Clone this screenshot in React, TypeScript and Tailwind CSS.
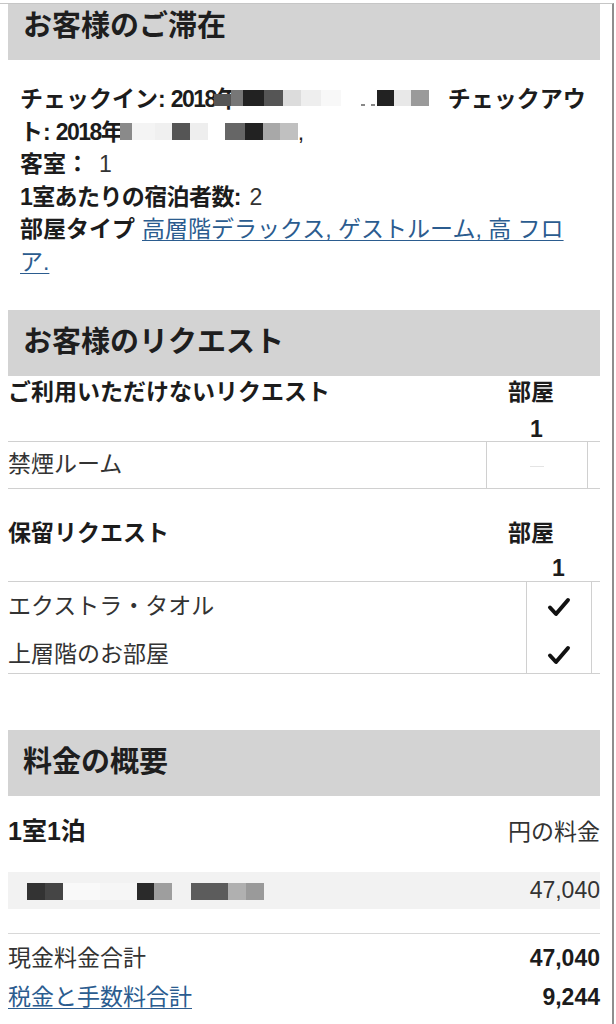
import React from "react";

type Block = { c: string };

function Mosaic({ blocks, className }: { blocks: Block[]; className: string }) {
  return (
    <span className={"relative inline-flex align-middle " + className}>
      {blocks.map((b, i) => (
        <span key={i} className={b.c} />
      ))}
    </span>
  );
}

const line1A: Block[] = [
  { c: "w-[17px] h-[12px] self-end bg-[#555]" },
  { c: "w-[12px] h-[16px] bg-[#777]" },
  { c: "w-[21px] h-[16px] bg-[#222]" },
  { c: "w-[19px] h-[16px] bg-[#555]" },
  { c: "w-[18px] h-[16px] bg-[#dcdcdc]" },
  { c: "w-[20px] h-[16px] bg-[#eeeeee]" },
  { c: "w-[20px] h-[16px] bg-[#f8f8f8]" },
];
const line1B: Block[] = [
  { c: "w-[4px] h-[2px] self-end bg-[#888]" },
  { c: "w-[6px] h-[2px] self-end bg-transparent" },
  { c: "w-[4px] h-[2px] self-end bg-[#888]" },
  { c: "w-[2px] h-[2px] self-end bg-transparent" },
  { c: "w-[17px] h-[16px] bg-[#222]" },
  { c: "w-[17px] h-[16px] bg-[#e8e8e8]" },
  { c: "w-[18px] h-[16px] bg-[#9a9a9a]" },
];
const line2: Block[] = [
  { c: "w-[12px] h-[17px] bg-[#8a8a8a]" },
  { c: "w-[23px] h-[17px] bg-[#f4f4f4]" },
  { c: "w-[17px] h-[17px] bg-[#f0f0f0]" },
  { c: "w-[18px] h-[17px] bg-[#555]" },
  { c: "w-[18px] h-[17px] bg-[#eeeeee]" },
  { c: "w-[17px] h-[17px] bg-transparent" },
  { c: "w-[20px] h-[17px] bg-[#666]" },
  { c: "w-[18px] h-[17px] bg-[#222]" },
  { c: "w-[17px] h-[17px] bg-[#a8a8a8]" },
  { c: "w-[18px] h-[17px] bg-[#c0c0c0]" },
];
const priceRow: Block[] = [
  { c: "w-[18px] h-[17px] bg-[#333]" },
  { c: "w-[18px] h-[17px] bg-[#454545]" },
  { c: "w-[37px] h-[17px] bg-[#f9f9f9]" },
  { c: "w-[37px] h-[17px] bg-[#f6f6f6]" },
  { c: "w-[17px] h-[17px] bg-[#2a2a2a]" },
  { c: "w-[18px] h-[17px] bg-[#9e9e9e]" },
  { c: "w-[19px] h-[17px] bg-transparent" },
  { c: "w-[37px] h-[17px] bg-[#5c5c5c]" },
  { c: "w-[18px] h-[17px] bg-[#b0b0b0]" },
  { c: "w-[18px] h-[17px] bg-[#9a9a9a]" },
];

function Check() {
  return (
    <svg width="24" height="20" viewBox="0 0 24 20" fill="none">
      <path
        d="M3 10.5 L9 17 L21 3"
        stroke="#111"
        strokeWidth="4"
        strokeLinecap="round"
        strokeLinejoin="round"
      />
    </svg>
  );
}

function Header({ children, first }: { children: React.ReactNode; first?: boolean }) {
  return (
    <div
      className={
        "bg-[#d3d3d3] pl-[15px] flex items-center text-[29px] font-bold text-[#1e1e1e] " +
        (first ? "h-[56px] pb-[10px]" : "h-[66px]")
      }
    >
      {children}
    </div>
  );
}

export default function App() {
  return (
    <div className="w-[616px] min-h-[1024px] bg-white overflow-hidden [font-family:'Liberation_Sans','Noto_Sans_CJK_JP',sans-serif] text-[#1c1c1c]">
      <div className="mt-[3px] w-[614px] min-h-[1021px] border-t border-t-[#c6c6c6] border-r-2 border-r-[#8e8e8e] pl-[8px] pr-[12px]">
        <Header first>お客様のご滞在</Header>

        <div className="pt-[23px] pl-[12px] text-[23px] leading-[32.6px]">
          <div className="whitespace-nowrap">
            <span className="font-bold">チェックイン:</span>
            <span className="font-bold ml-[5px] tracking-[-1.5px]">2018</span>
            <span className="font-bold">年</span>
            <Mosaic blocks={line1A} className="ml-[-25px] mt-[-6px]" />
            <Mosaic blocks={line1B} className="ml-[20px] mt-[-6px]" />
            <span className="font-bold ml-[19px]">チェックアウ</span>
          </div>
          <div className="whitespace-nowrap">
            <span className="font-bold">ト:</span>
            <span className="font-bold ml-[5px] tracking-[-1.5px]">2018</span>
            <span className="font-bold">年</span>
            <Mosaic blocks={line2} className="ml-[-4px] mt-[-4px]" />
            <span>,</span>
          </div>
          <div>
            <span className="font-bold">客室：</span>
            <span className="ml-[10px] text-[#333]">1</span>
          </div>
          <div>
            <span className="font-bold tracking-[-0.6px]">1室あたりの宿泊者数</span>
            <span className="font-bold">:</span>
            <span className="ml-[8px] text-[#333]">2</span>
          </div>
          <div>
            <span className="font-bold">部屋タイプ</span>
            <a href="#" className="ml-[7px] text-[#2b5c8f] underline decoration-1 underline-offset-[3px]">
              高層階デラックス, ゲストルーム, 高 フロ
              <br />
              ア.
            </a>
          </div>
        </div>

        <div className="mt-[31px]">
          <Header>お客様のリクエスト</Header>
        </div>

        {/* Table 1 */}
        <div className="text-[23px]">
          <div className="h-[33px] flex justify-between items-center">
            <span className="font-bold">ご利用いただけないリクエスト</span>
            <span className="font-bold mr-[46px]">部屋</span>
          </div>
          <div className="h-[32px] grid grid-cols-[1fr_101px_13px]">
            <div />
            <div className="flex justify-center items-end pb-[1px] leading-[22px] font-bold">1</div>
            <div />
          </div>
          <div className="grid grid-cols-[1fr_101px_13px] border-t border-b border-[#d0d0d0]">
            <div className="h-[46px] flex items-center text-[#333]">禁煙ルーム</div>
            <div className="border-l border-[#d0d0d0] flex items-center justify-center">
              <span className="w-[14px] h-[1px] bg-[#e4e4e4] mt-[4px]" />
            </div>
            <div className="border-l border-[#d0d0d0]" />
          </div>
        </div>

        {/* Table 2 */}
        <div className="mt-[28px] text-[23px]">
          <div className="h-[33px] flex justify-between items-center">
            <span className="font-bold">保留リクエスト</span>
            <span className="font-bold mr-[46px]">部屋</span>
          </div>
          <div className="h-[31px] grid grid-cols-[1fr_65px_9px]">
            <div />
            <div className="flex justify-center items-end pb-[2px] leading-[22px] font-bold">1</div>
            <div />
          </div>
          <div className="grid grid-cols-[1fr_65px_9px] border-t border-b border-[#d0d0d0]">
            <div className="h-[49px] flex items-center text-[#333]">エクストラ・タオル</div>
            <div className="border-l border-[#d0d0d0] flex items-center justify-center pt-[2px]">
              <Check />
            </div>
            <div className="border-l border-[#d0d0d0]" />
            <div className="h-[42px] flex items-start pt-[7px] leading-[33px] text-[#333]">上層階のお部屋</div>
            <div className="border-l border-[#d0d0d0] flex items-start justify-center pt-[14px]">
              <Check />
            </div>
            <div className="border-l border-[#d0d0d0]" />
          </div>
        </div>

        <div className="mt-[56px]">
          <Header>料金の概要</Header>
        </div>

        <div className="text-[23px]">
          <div className="mt-[20px] h-[33px] flex justify-between items-center">
            <span className="font-bold text-[25px]">1室1泊</span>
            <span className="text-[#333]">円の料金</span>
          </div>
          <div className="mt-[23px] h-[37px] bg-[#f2f2f2] flex justify-between items-center pl-[19px]">
            <Mosaic blocks={priceRow} className="mt-[2px]" />
            <span className="text-[#333]">47,040</span>
          </div>
          <div className="mt-[24px] border-t border-[#d8d8d8] pt-[5px]">
            <div className="h-[39px] flex justify-between items-center">
              <span className="text-[#333]">現金料金合計</span>
              <span className="font-bold">47,040</span>
            </div>
            <div className="h-[39px] flex justify-between items-center">
              <a href="#" className="text-[#2b5c8f] underline decoration-1 underline-offset-[3px]">
                税金と手数料合計
              </a>
              <span className="font-bold">9,244</span>
            </div>
          </div>
        </div>
      </div>
    </div>
  );
}
